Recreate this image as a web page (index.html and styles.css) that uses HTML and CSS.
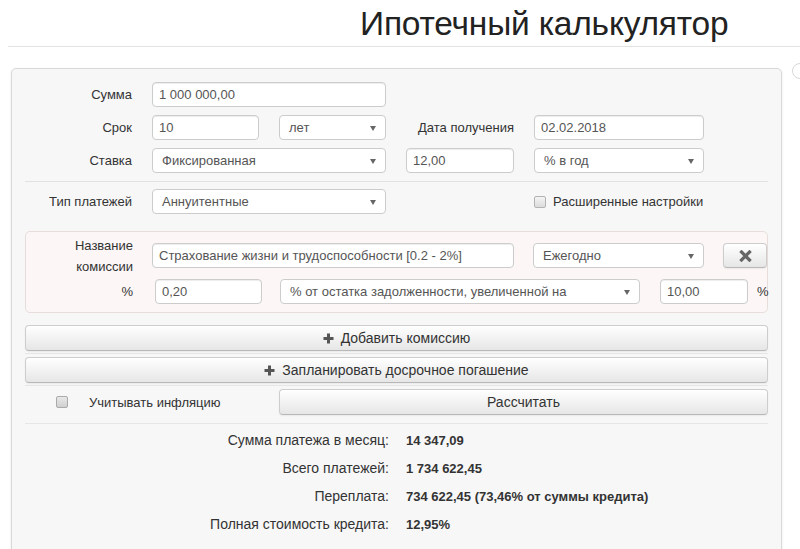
FILE: index.html
```html
<!DOCTYPE html>
<html lang="ru">
<head>
<meta charset="utf-8">
<title>Ипотечный калькулятор</title>
<link rel="stylesheet" href="styles.css">
</head>
<body>
<header class="header">
  <h1 class="title">Ипотечный калькулятор</h1>
</header>
<div class="layout">
  <main class="panel">
    <div class="form-grid">
      <label class="lbl">Сумма</label>
      <input class="field span2" type="text" value="1 000 000,00">
      <span class="span2"></span>

      <label class="lbl">Срок</label>
      <input class="field" type="text" value="10">
      <div class="select">лет</div>
      <label class="lbl">Дата получения</label>
      <input class="field" type="text" value="02.02.2018">

      <label class="lbl">Ставка</label>
      <div class="select span2">Фиксированная</div>
      <input class="field" type="text" value="12,00">
      <div class="select">% в год</div>
    </div>

    <div class="divider"></div>

    <div class="form-grid">
      <label class="lbl">Тип платежей</label>
      <div class="select span2">Аннуитентные</div>
      <span></span>
      <div class="check-wrap"><span class="checkbox"></span><span>Расширенные настройки</span></div>
    </div>

    <section class="commission">
      <div class="c-row">
        <div class="c-lbl"><span>Название</span><span>комиссии</span></div>
        <input class="field c-name" type="text" value="Страхование жизни и трудоспособности [0.2 - 2%]">
        <div class="select c-period">Ежегодно</div>
        <button class="btn c-del" type="button" aria-label="Удалить">
          <svg width="13" height="12" viewBox="0 0 13 12"><path d="M2.5 2 L10.5 10 M10.5 2 L2.5 10" stroke="#666" stroke-width="3.2" stroke-linecap="square"/></svg>
        </button>
      </div>
      <div class="c-row">
        <div class="c-lbl c-lbl-one">%</div>
        <input class="field c-pct" type="text" value="0,20">
        <div class="select c-base">% от остатка задолженности, увеличенной на</div>
        <input class="field c-inc" type="text" value="10,00">
        <span class="c-unit">%</span>
      </div>
    </section>

    <div class="btn-row first">
      <button class="btn wide" type="button"><svg class="plus" width="11" height="11" viewBox="0 0 11 11"><path d="M5.5 0.5 V10.5 M0.5 5.5 H10.5" stroke="#555" stroke-width="3"/></svg>Добавить комиссию</button>
    </div>
    <div class="btn-row">
      <button class="btn wide" type="button"><svg class="plus" width="11" height="11" viewBox="0 0 11 11"><path d="M5.5 0.5 V10.5 M0.5 5.5 H10.5" stroke="#555" stroke-width="3"/></svg>Запланировать досрочное погашение</button>
    </div>

    <div class="calc-row">
      <div class="infl"><span class="checkbox gray"></span><span>Учитывать инфляцию</span></div>
      <button class="btn calc" type="button">Рассчитать</button>
    </div>

    <div class="results">
      <span class="r-lbl">Сумма платежа в месяц:</span><span class="r-val">14 347,09</span>
      <span class="r-lbl">Всего платежей:</span><span class="r-val">1 734 622,45</span>
      <span class="r-lbl">Переплата:</span><span class="r-val">734 622,45 (73,46% от суммы кредита)</span>
      <span class="r-lbl">Полная стоимость кредита:</span><span class="r-val">12,95%</span>
    </div>
  </main>
  <aside class="side"></aside>
</div>
</body>
</html>
```
FILE: styles.css
```css
html, body {
  margin: 0;
  overflow: hidden;
}
body {
  font-family: "Liberation Sans", Arial, sans-serif;
  font-size: 13px;
  color: #333;
  background: #fff;
  width: 800px;
  height: 549px;
}
.header {
  height: 46px;
  margin-left: 8px;
  border-bottom: 1px solid #e3e3e3;
  box-sizing: content-box;
}
.title {
  margin: 0;
  padding: 4px 0 0 352px;
  font-size: 33.5px;
  line-height: 40px;
  font-weight: normal;
  color: #222;
  letter-spacing: -0.2px;
}
.layout {
  display: flex;
  align-items: flex-start;
  margin-top: 21px;
  margin-left: 11px;
}
.panel {
  flex: 0 0 auto;
  width: 771px;
  box-sizing: border-box;
  border: 1px solid #d9d9d9;
  border-radius: 5px;
  background: #f7f7f7;
  padding: 13px 13px 60px;
  box-shadow: 0 1px 3px rgba(0,0,0,0.08);
}
.side {
  flex: 0 0 auto;
  width: 14px;
  height: 14px;
  margin-left: 10px;
  margin-top: -5px;
  border: 1px solid #d8d8d8;
  border-radius: 50%;
  background: #fff;
}
.form-grid {
  display: grid;
  grid-template-columns: 107px 107px 107px 108px 170px;
  grid-auto-rows: 25px;
  column-gap: 20px;
  row-gap: 8px;
}
.span2 { grid-column: span 2; }
.lbl {
  display: flex;
  align-items: center;
  justify-content: flex-end;
  text-align: right;
  color: #333;
}
.field {
  box-sizing: border-box;
  height: 25px;
  width: 100%;
  margin: 0;
  padding: 0 6px;
  border: 1px solid #ccc;
  border-radius: 4px;
  background: #fff;
  box-shadow: inset 0 1px 1px rgba(0,0,0,0.075);
  font-family: inherit;
  font-size: 13px;
  color: #555;
  outline: none;
}
.select {
  position: relative;
  box-sizing: border-box;
  height: 25px;
  display: flex;
  align-items: center;
  padding: 0 24px 0 9px;
  border: 1px solid #ccc;
  border-radius: 4px;
  background: #fff;
  color: #555;
  white-space: nowrap;
  overflow: hidden;
}
.select::after {
  content: "";
  position: absolute;
  right: 9px;
  top: 10px;
  border-left: 3px solid transparent;
  border-right: 3px solid transparent;
  border-top: 5px solid #666;
}
.divider {
  height: 1px;
  background: #e2e2e2;
  margin: 8px 0 7px;
}
.check-wrap {
  display: flex;
  align-items: center;
  gap: 7px;
  color: #333;
}
.checkbox {
  display: inline-block;
  box-sizing: border-box;
  width: 12px;
  height: 12px;
  border: 1px solid #b3b3b3;
  border-radius: 2px;
  background: linear-gradient(#f4f4f4, #dcdcdc);
}
.checkbox.gray {
  background: linear-gradient(#e8e8e8, #cfcfcf);
  border-color: #aaa;
}
.commission {
  margin-top: 17px;
  border: 1px solid #e7dedb;
  border-radius: 5px;
  background: #fcf7f6;
  padding: 11px 0 8px;
  display: flex;
  flex-direction: column;
  gap: 11px;
}
.c-row {
  display: flex;
  align-items: center;
  height: 25px;
}
.c-lbl {
  flex: 0 0 107px;
  height: 25px;
  display: flex;
  flex-direction: column;
  justify-content: center;
  align-items: flex-end;
  line-height: 21px;
  margin-right: 19px;
  color: #333;
}
.c-lbl-one { margin-right: 22px; }
.c-name { flex: 0 0 362px; width: 362px; }
.c-period { flex: 0 0 171px; margin-left: 19px; }
.c-pct { flex: 0 0 107px; width: 107px; }
.c-base { flex: 0 0 360px; margin-left: 18px; }
.c-inc { flex: 0 0 88px; width: 88px; margin-left: 20px; }
.c-unit { margin-left: 9px; color: #333; }
.btn {
  box-sizing: border-box;
  margin: 0;
  padding: 0;
  display: flex;
  align-items: center;
  justify-content: center;
  border: 1px solid #cdcdcd;
  border-bottom-color: #b8b8b8;
  border-radius: 4px;
  background: linear-gradient(#ffffff, #e6e6e6);
  box-shadow: inset 0 1px 0 rgba(255,255,255,0.3), 0 1px 2px rgba(0,0,0,0.06);
  font-family: inherit;
  font-size: 14px;
  color: #333;
}
.btn.c-del {
  flex: 0 0 44px;
  margin-left: 19px;
  height: 25px;
}
.btn-row {
  padding-bottom: 2px;
  border-bottom: 1px solid #e6e6e6;
}
.btn-row.first { margin-top: 12px; }
.btn-row + .btn-row { margin-top: 3px; }
.wide {
  width: 100%;
  height: 26px;
  gap: 7px;
}
.plus { display: block; }
.calc-row {
  display: flex;
  align-items: center;
  margin-top: 3px;
  padding-bottom: 8px;
  border-bottom: 1px solid #e6e6e6;
}
.infl {
  flex: 0 0 223px;
  display: flex;
  align-items: center;
  gap: 21px;
  padding-left: 31px;
  box-sizing: border-box;
  margin-right: 31px;
}
.calc {
  flex: 1 1 auto;
  height: 26px;
}
.results {
  display: grid;
  grid-template-columns: 364px auto;
  column-gap: 17px;
  grid-auto-rows: 28px;
  align-items: center;
  margin-top: 2px;
}
.r-lbl {
  text-align: right;
  font-size: 14px;
  color: #333;
}
.r-val {
  font-weight: bold;
  color: #333;
}
```
